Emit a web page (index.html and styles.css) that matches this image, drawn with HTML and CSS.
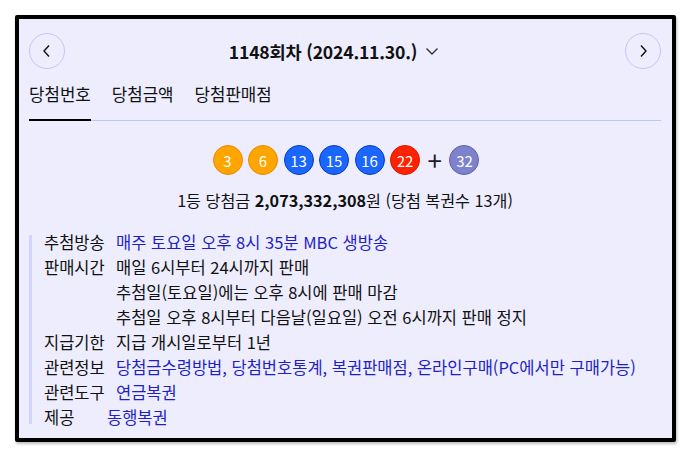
FILE: index.html
```html
<!DOCTYPE html>
<html lang="ko">
<head>
<meta charset="utf-8">
<link rel="stylesheet" href="styles.css">
</head>
<body>
<div class="frame">
  <div class="header">
    <button class="nav-btn" aria-label="이전">
      <svg width="10" height="14" viewBox="0 0 10 14"><polyline points="7,1.5 2,7 7,12.5" fill="none" stroke="#111" stroke-width="1.4"/></svg>
    </button>
    <div class="title">1148회차 (2024.11.30.)
      <svg class="caret" width="14" height="9" viewBox="0 0 14 9"><polyline points="1.5,1.5 7,7 12.5,1.5" fill="none" stroke="#333" stroke-width="1.4"/></svg>
    </div>
    <button class="nav-btn" aria-label="다음">
      <svg width="10" height="14" viewBox="0 0 10 14"><polyline points="3,1.5 8,7 3,12.5" fill="none" stroke="#111" stroke-width="1.4"/></svg>
    </button>
  </div>
  <div class="tabs">
    <span class="tab active">당첨번호</span>
    <span class="tab">당첨금액</span>
    <span class="tab">당첨판매점</span>
  </div>
  <div class="balls">
    <span class="ball yellow">3</span>
    <span class="ball yellow">6</span>
    <span class="ball blue">13</span>
    <span class="ball blue">15</span>
    <span class="ball blue">16</span>
    <span class="ball red">22</span>
    <span class="plus">+</span>
    <span class="ball bonus">32</span>
  </div>
  <p class="prize">1등 당첨금 <b>2,073,332,308</b>원 (당첨 복권수 13개)</p>
  <div class="info">
    <div class="row"><span class="label">추첨방송</span><span class="value link">매주 토요일 오후 8시 35분 MBC 생방송</span></div>
    <div class="row"><span class="label">판매시간</span><span class="value">매일 6시부터 24시까지 판매<br>추첨일(토요일)에는 오후 8시에 판매 마감<br>추첨일 오후 8시부터 다음날(일요일) 오전 6시까지 판매 정지</span></div>
    <div class="row"><span class="label">지급기한</span><span class="value">지급 개시일로부터 1년</span></div>
    <div class="row"><span class="label">관련정보</span><span class="value link">당첨금수령방법, 당첨번호통계, 복권판매점, 온라인구매(PC에서만 구매가능)</span></div>
    <div class="row"><span class="label">관련도구</span><span class="value link">연금복권</span></div>
    <div class="row"><span class="label short">제공</span><span class="value link">동행복권</span></div>
  </div>
</div>
</body>
</html>
```
FILE: styles.css
```css
* { box-sizing: border-box; }
html, body { margin: 0; padding: 0; background: #fff; }
body {
  font-family: "Noto Sans CJK KR", "Noto Sans", sans-serif;
  color: #111;
  width: 692px;
  height: 458px;
  padding: 15px 16px 16px 15px;
}
.frame {
  width: 661px;
  height: 427px;
  border: 4px solid #000;
  border-radius: 2px;
  background: #ededfd;
  padding: 14px 11px 0 10px;
  box-shadow: 1px 2px 3px rgba(0,0,0,0.25);
}
.header {
  display: flex;
  align-items: center;
  justify-content: space-between;
  height: 36px;
}
.nav-btn {
  width: 36px;
  height: 36px;
  border-radius: 50%;
  border: 1px solid #c4c4f6;
  background: transparent;
  display: flex;
  align-items: center;
  justify-content: center;
  padding: 0;
}
.title {
  font-size: 17.6px;
  font-weight: bold;
  display: flex;
  align-items: center;
  gap: 8px;
  letter-spacing: -0.2px;
  margin-right: 22px;
}
.caret { margin-top: 1px; }
.tabs {
  display: flex;
  gap: 21px;
  margin-top: 13px;
  border-bottom: 1px solid #b6c9fb;
}
.tab {
  font-size: 16.8px;
  line-height: 24px;
  padding-bottom: 13px;
  margin-bottom: -1px;
  border-bottom: 2px solid transparent;
}
.tab.active { border-bottom-color: #000; }
.balls {
  display: flex;
  justify-content: center;
  align-items: center;
  gap: 5.5px;
  margin-top: 24px;
  padding-left: 2px;
}
.ball {
  width: 30px;
  height: 30px;
  border-radius: 50%;
  color: #fff;
  font-size: 15px;
  display: flex;
  align-items: center;
  justify-content: center;
  border: 1px solid;
}
.yellow { background: #fea500; border-color: #ec8a00; }
.blue { background: #1a66ff; border-color: #0a3bb8; }
.red { background: #ff2200; border-color: #d81800; }
.bonus { background: #7e82cc; border-color: #5d61a6; }
.plus {
  font-size: 26px;
  line-height: 24px;
  color: #1a1a2a;
  margin: 0 2px;
}
.prize {
  margin: 13px 0 0;
  text-align: center;
  font-size: 16.2px;
  line-height: 24px;
}
.prize b { font-weight: bold; }
.info {
  position: relative;
  margin: 18px 0 0;
  padding-left: 15px;
}
.info::before {
  content: "";
  position: absolute;
  left: 0;
  top: 5px;
  bottom: 6px;
  width: 3px;
  background: #d3d3fb;
}
.row {
  display: flex;
  font-size: 16.5px;
  line-height: 25px;
}
.label { width: 72px; flex: none; }
.label.short { width: 63px; }
.link { color: #1f1fc4; }
```
